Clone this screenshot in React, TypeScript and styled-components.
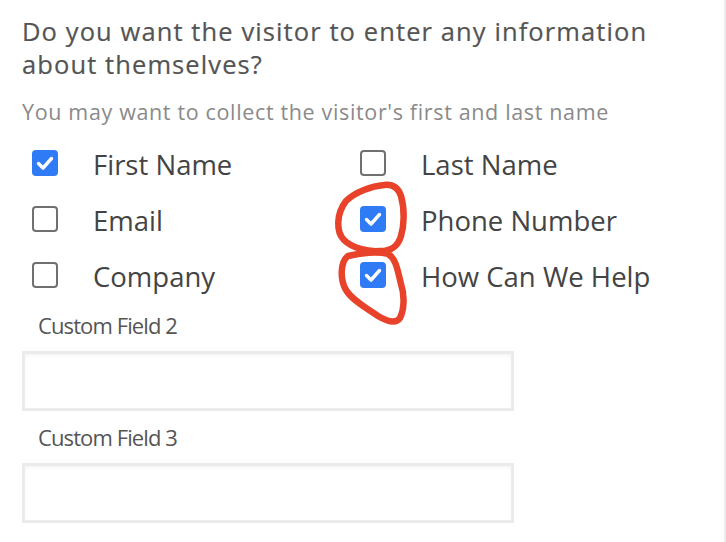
import React from "react";
import styled, { createGlobalStyle } from "styled-components";

const Global = createGlobalStyle`
  html, body { margin: 0; padding: 0; background: #ffffff; }
  * { box-sizing: border-box; }
`;

const Page = styled.div`
  position: relative;
  width: 726px;
  height: 542px;
  border-right: 2px solid #ececec;
  padding: 15px 0 0 22px;
  overflow: hidden;
  font-family: "Open Sans", "Noto Sans", sans-serif;
`;

const Heading = styled.h2`
  margin: 0;
  font-family: "Open Sans", "Noto Sans", sans-serif;
  font-weight: 400;
  font-size: 25.5px;
  line-height: 33px;
  color: #545454;
  width: 670px;
  letter-spacing: 1.1px;
  -webkit-text-stroke: 0.2px #545454;
`;

const Sub = styled.p`
  margin: 17px 0 0 0;
  font-family: "Open Sans", "Noto Sans", sans-serif;
  font-size: 21.5px;
  line-height: 28px;
  color: #8a8a8a;
  letter-spacing: 0.65px;
`;

const Options = styled.div`
  display: grid;
  grid-template-columns: 328px 1fr;
  grid-auto-rows: 56px;
  margin: 9px 0 0 10px;
`;

const Option = styled.label`
  display: flex;
  align-items: center;
  gap: 35px;
  font-size: 27.5px;
  color: #444444;
  padding-top: 3px;
`;

const Box = styled.span<{ $checked?: boolean }>`
  flex: none;
  width: 26px;
  height: 26px;
  margin-top: -4px;
  border-radius: 4px;
  display: flex;
  align-items: center;
  justify-content: center;
  background: ${(p) => (p.$checked ? "#2f7af5" : "#ffffff")};
  border: ${(p) => (p.$checked ? "none" : "2px solid #707070")};
`;

const Field = styled.div`
  display: flex;
  flex-direction: column;
  width: 492px;
  margin-top: 8px;
  & + & {
    margin-top: 12px;
  }
`;

const FieldLabel = styled.span`
  padding-left: 16px;
  font-size: 22px;
  line-height: 28px;
  color: #555555;
  letter-spacing: -0.9px;
  margin-bottom: 12px;
`;

const Input = styled.input`
  height: 60px;
  width: 492px;
  border: 3px solid #ebebeb;
  box-shadow: inset 0 2px 3px rgba(0, 0, 0, 0.04);
  background: #ffffff;
  outline: none;
`;

const Scribble = styled.svg`
  position: absolute;
  left: 0;
  top: 0;
  pointer-events: none;
`;

const Check = () => (
  <svg width="20" height="20" viewBox="0 0 20 20">
    <path
      d="M3.5 10.5 L8 15 L16.5 5.5"
      fill="none"
      stroke="#ffffff"
      strokeWidth="3.4"
      strokeLinecap="round"
      strokeLinejoin="round"
    />
  </svg>
);

const options: { label: string; checked: boolean }[] = [
  { label: "First Name", checked: true },
  { label: "Last Name", checked: false },
  { label: "Email", checked: false },
  { label: "Phone Number", checked: true },
  { label: "Company", checked: false },
  { label: "How Can We Help", checked: true },
];

export default function App() {
  return (
    <>
      <Global />
      <Page>
        <Heading>Do you want the visitor to enter any information about themselves?</Heading>
        <Sub>You may want to collect the visitor's first and last name</Sub>
        <Options>
          {options.map((o) => (
            <Option key={o.label}>
              <Box $checked={o.checked}>{o.checked && <Check />}</Box>
              {o.label}
            </Option>
          ))}
        </Options>
        <Field>
          <FieldLabel>Custom Field 2</FieldLabel>
          <Input />
        </Field>
        <Field>
          <FieldLabel>Custom Field 3</FieldLabel>
          <Input />
        </Field>
        <Scribble width="726" height="542" viewBox="0 0 726 542">
          <path
            d="M346 201 C 355 192, 372 186, 384 185 C 392 184, 398 187, 401 196 C 405 210, 404 226, 401 236 C 398 246, 392 251, 380 251 C 368 252, 352 248, 344 240 C 336 232, 336 214, 346 201 Z"
            fill="none"
            stroke="#e8432a"
            strokeWidth="6.5"
            strokeLinecap="round"
            strokeLinejoin="round"
          />
          <path
            d="M348 256 C 360 253, 378 251, 388 254 C 396 258, 398 272, 401 284 C 405 296, 404 310, 400 318 C 396 324, 388 322, 378 316 C 366 308, 352 300, 346 290 C 340 280, 340 262, 348 256 Z"
            fill="none"
            stroke="#e8432a"
            strokeWidth="6.5"
            strokeLinecap="round"
            strokeLinejoin="round"
          />
        </Scribble>
      </Page>
    </>
  );
}
